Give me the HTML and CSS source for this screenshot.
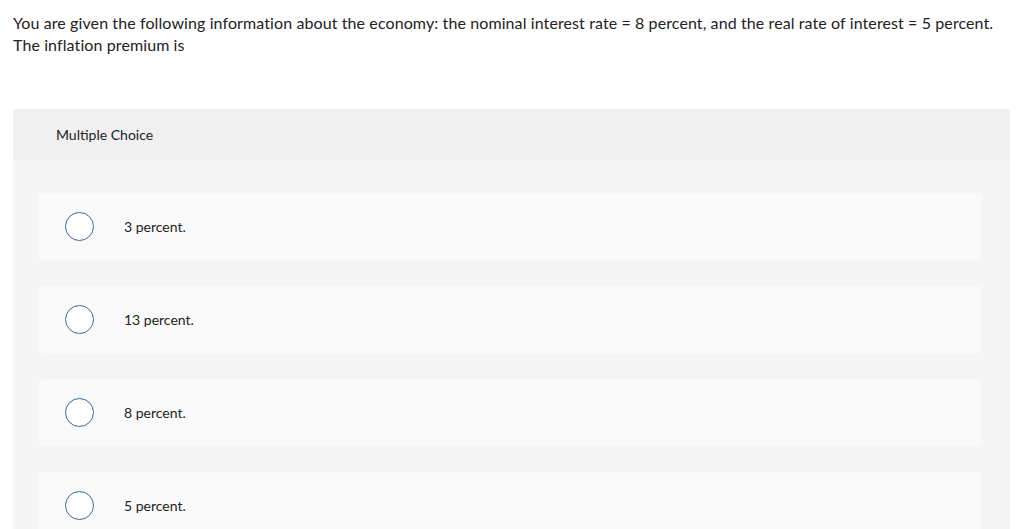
FILE: index.html
```html
<!DOCTYPE html>
<html>
<head>
<meta charset="utf-8">
<link rel="stylesheet" href="styles.css">
</head>
<body>
<p class="question">You are given the following information about the economy: the nominal interest rate = 8 percent, and the real rate of interest = 5 percent. The inflation premium is</p>
<div class="mc">
  <div class="mc-head">Multiple Choice</div>
  <div class="mc-body">
    <div class="opt"><span class="radio"></span><span class="label">3 percent.</span></div>
    <div class="opt"><span class="radio"></span><span class="label">13 percent.</span></div>
    <div class="opt"><span class="radio"></span><span class="label">8 percent.</span></div>
    <div class="opt"><span class="radio"></span><span class="label">5 percent.</span></div>
  </div>
</div>
</body>
</html>
```
FILE: styles.css
```css
html, body { margin: 0; padding: 0; background: #fff; }
body {
  font-family: "Lato", "Open Sans", sans-serif;
  color: #222;
  padding: 12px 14px 0 13px;
  overflow: hidden;
  height: 529px;
  box-sizing: border-box;
}
.question {
  margin: 0;
  font-size: 16px;
  line-height: 22px;
  letter-spacing: 0.1px;
  width: 995px;
}
.mc {
  margin-top: 53px;
  width: 997px;
  border-radius: 4px 4px 0 0;
  background: #f5f5f5;
}
.mc-head {
  background: #f0f0f0;
  height: 51px;
  padding-left: 43px;
  display: flex;
  align-items: center;
  font-size: 14px;
  border-radius: 4px 4px 0 0;
}
.mc-body {
  padding: 33px 29px 20px 26px;
  display: flex;
  flex-direction: column;
  gap: 26px;
}
.opt {
  height: 67px;
  background: #fafafa;
  border-radius: 3px;
  display: flex;
  align-items: center;
  padding-left: 26px;
}
.radio {
  width: 27px;
  height: 27px;
  border: 1px solid #3a68a0;
  border-radius: 50%;
  background: #fff;
  flex: none;
}
.label {
  margin-left: 30px;
  font-size: 14px;
}
```
